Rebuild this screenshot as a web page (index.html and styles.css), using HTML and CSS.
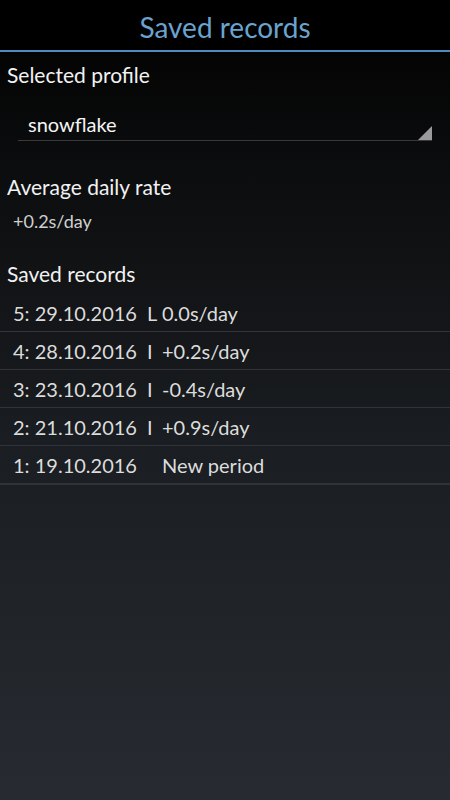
FILE: index.html
```html
<!DOCTYPE html>
<html>
<head>
  <meta charset="UTF-8">
  <title>Saved records</title>
  <link rel="stylesheet" href="styles.css">
</head>
<body>
  <div class="screen">
    <div class="title-bar">
      <h1>Saved records</h1>
    </div>

    <div class="content">
      <div class="section-label">Selected profile</div>
      <div class="spinner">
        <span class="spinner-value">snowflake</span>
        <span class="spinner-arrow"></span>
      </div>

      <div class="section-label rate-label">Average daily rate</div>
      <div class="rate-value">+0.2s/day</div>

      <div class="section-label records-label">Saved records</div>
      <ul class="records">
        <li class="record"><span class="record-date">5: 29.10.2016</span><span class="record-mark">L</span><span class="record-value">0.0s/day</span></li>
        <li class="record"><span class="record-date">4: 28.10.2016</span><span class="record-mark">I</span><span class="record-value">+0.2s/day</span></li>
        <li class="record"><span class="record-date">3: 23.10.2016</span><span class="record-mark">I</span><span class="record-value">-0.4s/day</span></li>
        <li class="record"><span class="record-date">2: 21.10.2016</span><span class="record-mark">I</span><span class="record-value">+0.9s/day</span></li>
        <li class="record"><span class="record-date">1: 19.10.2016</span><span class="record-mark"></span><span class="record-value">New period</span></li>
      </ul>
    </div>
  </div>
</body>
</html>
```

FILE: styles.css
```css
/* Dark holo theme */
:root {
  --title-color: #6aa3cf;
  --accent-line: #4c8cc0;
  --text-color: #f2f2f2;
  --muted-text: #cfcfcf;
  --row-text: #dcdcdc;
  --divider: #30343a;
}

html, body {
  margin: 0;
  padding: 0;
}

body {
  font-family: Lato, "Open Sans", sans-serif;
  color: var(--text-color);
  background: linear-gradient(to bottom, #000 0%, #0b0c0d 20%, #1a1d21 55%, #272a30 100%);
  min-height: 800px;
}

.screen {
  display: flex;
  flex-direction: column;
}

.title-bar {
  height: 50px;
  border-bottom: 2px solid var(--accent-line);
  background-color: #000;
  display: flex;
  align-items: center;
  justify-content: center;
}

.title-bar h1 {
  margin: 0;
  font-size: 28px;
  font-weight: normal;
  color: var(--title-color);
  padding-top: 3px;
}

.content {
  display: flex;
  flex-direction: column;
}

.section-label {
  font-size: 21px;
  padding-left: 7px;
  height: 24px;
  line-height: 24px;
  margin-top: 11px;
}

.spinner {
  margin: 22px 18px 0 18px;
  height: 31px;
  border-bottom: 1px solid #3a3a3a;
  display: flex;
  align-items: flex-start;
  justify-content: space-between;
}

.spinner-value {
  font-size: 20px;
  padding-left: 10px;
  padding-top: 3px;
  line-height: 24px;
  color: #f4f4f4;
}

.spinner-arrow {
  width: 0;
  height: 0;
  margin-top: 17px;
  border-left: 14px solid transparent;
  border-bottom: 14px solid #9a9a9a;
}

.rate-label {
  margin-top: 34px;
}

.rate-value {
  font-size: 18px;
  color: var(--muted-text);
  padding-left: 13px;
  margin-top: 12px;
  height: 20px;
  line-height: 20px;
}

.records-label {
  margin-top: 31px;
}

.records {
  list-style: none;
  margin: 8px 0 0 0;
  padding: 0;
}

.record {
  height: 37px;
  border-bottom: 1px solid var(--divider);
  display: flex;
  align-items: center;
  padding-left: 13px;
  font-size: 20px;
  color: var(--row-text);
}

.record:last-child {
  border-bottom: 2px solid var(--divider);
}

.record-date {
  width: 134px;
}

.record-mark {
  width: 15px;
}
```
